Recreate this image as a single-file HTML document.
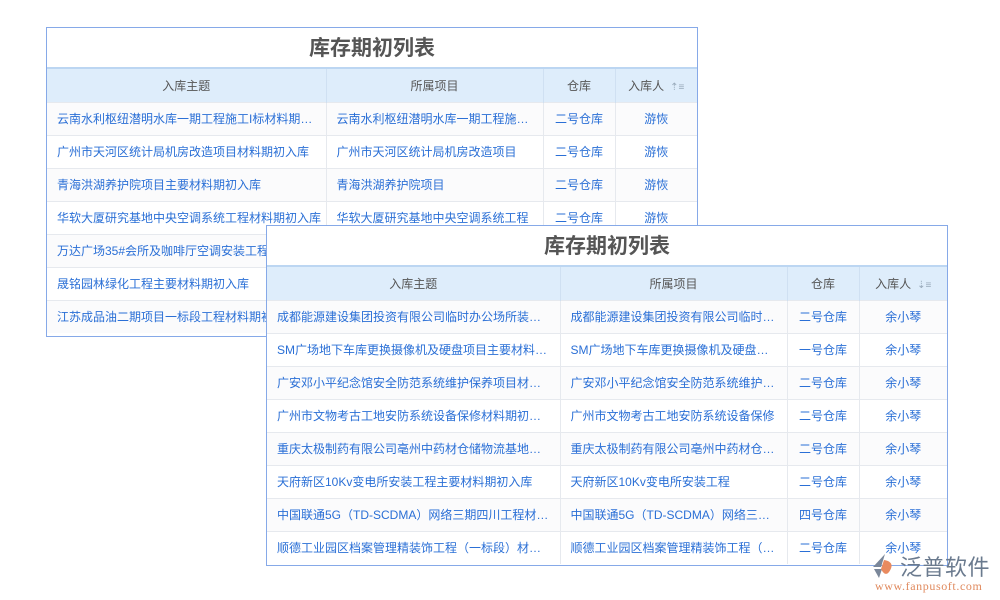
<!DOCTYPE html>
<html><head><meta charset="utf-8"><style>
*{margin:0;padding:0;box-sizing:border-box}
body{width:1000px;height:600px;background:#fff;position:relative;overflow:hidden;font-family:"Liberation Sans","Noto Sans CJK SC",sans-serif}
.t{position:absolute;background:#fff;border:1px solid #86a9e8}
.ti{height:41px;line-height:41px;text-align:center;font-size:21px;font-weight:bold;color:#555;border-bottom:2px solid #bcd6f2}
table{border-collapse:collapse;table-layout:fixed;width:100%}
th{background:#deedfb;height:33px;font-weight:normal;font-size:12px;color:#555;border-right:1px solid #cfe0f2}
td{height:33px;font-size:12px;color:#2a6fd6;border-top:1px solid #e6e9ee;border-right:1px solid #e6e9ee;white-space:nowrap;overflow:hidden;text-overflow:ellipsis;padding:0 10px;background:#fff}
tr:nth-child(even) td{background:#fbfbfc}
td.c{text-align:center;padding:0}
th:last-child,td:last-child{border-right:none}
.s{color:#9ab;font-size:10px;margin-left:6px}
</style></head><body>
<div class="t" style="left:46px;top:27px;width:652px;height:310px">
<div class="ti">库存期初列表</div>
<table><colgroup><col style="width:279px"><col style="width:217px"><col style="width:72px"><col></colgroup>
<tr><th>入库主题</th><th>所属项目</th><th>仓库</th><th>入库人<span class="s">⇡≡</span></th></tr>
<tr><td>云南水利枢纽潜明水库一期工程施工I标材料期初入库</td><td>云南水利枢纽潜明水库一期工程施工I标</td><td class="c">二号仓库</td><td class="c">游恢</td></tr>
<tr><td>广州市天河区统计局机房改造项目材料期初入库</td><td>广州市天河区统计局机房改造项目</td><td class="c">二号仓库</td><td class="c">游恢</td></tr>
<tr><td>青海洪湖养护院项目主要材料期初入库</td><td>青海洪湖养护院项目</td><td class="c">二号仓库</td><td class="c">游恢</td></tr>
<tr><td style="text-overflow:clip">华软大厦研究基地中央空调系统工程材料期初入库</td><td>华软大厦研究基地中央空调系统工程</td><td class="c">二号仓库</td><td class="c">游恢</td></tr>
<tr><td style="text-overflow:clip">万达广场35#会所及咖啡厅空调安装工程材料期初入库</td><td></td><td></td><td></td></tr>
<tr><td>晟铭园林绿化工程主要材料期初入库</td><td></td><td></td><td></td></tr>
<tr><td style="text-overflow:clip">江苏成品油二期项目一标段工程材料期初入库</td><td></td><td></td><td></td></tr>
</table></div>
<div class="t" style="left:266px;top:225px;width:682px;height:341px">
<div class="ti">库存期初列表</div>
<table><colgroup><col style="width:293px"><col style="width:227px"><col style="width:72px"><col></colgroup>
<tr><th>入库主题</th><th>所属项目</th><th>仓库</th><th>入库人<span class="s">⇣≡</span></th></tr>
<tr><td>成都能源建设集团投资有限公司临时办公场所装修工程材料</td><td>成都能源建设集团投资有限公司临时办公场所</td><td class="c">二号仓库</td><td class="c">余小琴</td></tr>
<tr><td>SM广场地下车库更换摄像机及硬盘项目主要材料期初入库</td><td>SM广场地下车库更换摄像机及硬盘项目</td><td class="c">一号仓库</td><td class="c">余小琴</td></tr>
<tr><td>广安邓小平纪念馆安全防范系统维护保养项目材料期初入库</td><td>广安邓小平纪念馆安全防范系统维护保养</td><td class="c">二号仓库</td><td class="c">余小琴</td></tr>
<tr><td>广州市文物考古工地安防系统设备保修材料期初入库</td><td>广州市文物考古工地安防系统设备保修</td><td class="c">二号仓库</td><td class="c">余小琴</td></tr>
<tr><td>重庆太极制药有限公司亳州中药材仓储物流基地项目材料</td><td>重庆太极制药有限公司亳州中药材仓储物流</td><td class="c">二号仓库</td><td class="c">余小琴</td></tr>
<tr><td>天府新区10Kv变电所安装工程主要材料期初入库</td><td>天府新区10Kv变电所安装工程</td><td class="c">二号仓库</td><td class="c">余小琴</td></tr>
<tr><td>中国联通5G（TD-SCDMA）网络三期四川工程材料期初入库</td><td>中国联通5G（TD-SCDMA）网络三期四川工程</td><td class="c">四号仓库</td><td class="c">余小琴</td></tr>
<tr><td>顺德工业园区档案管理精装饰工程（一标段）材料期初入库</td><td>顺德工业园区档案管理精装饰工程（一标段）</td><td class="c">二号仓库</td><td class="c">余小琴</td></tr>
</table></div>
<div style="position:absolute;left:870px;top:553px;width:28px;height:26px">
<svg width="28" height="26" viewBox="0 0 28 26"><path d="M15 1 L3 14 L11 14 Z" fill="#7a879a"/><path d="M4 16 L12 16 L9 25 Z" fill="#7a879a"/><path d="M14 7 Q26 9 19 19 Q15 24 11 16 Z" fill="#e98a5f"/></svg></div>
<div style="position:absolute;left:900px;top:550px;font-size:22px;color:#6a7a8e;letter-spacing:0.5px">泛普软件</div>
<div style="position:absolute;left:875px;top:579px;font-size:12px;color:#e08a5e;font-family:'Liberation Serif',serif;letter-spacing:0.6px">www.fanpusoft.com</div>
</body></html>
